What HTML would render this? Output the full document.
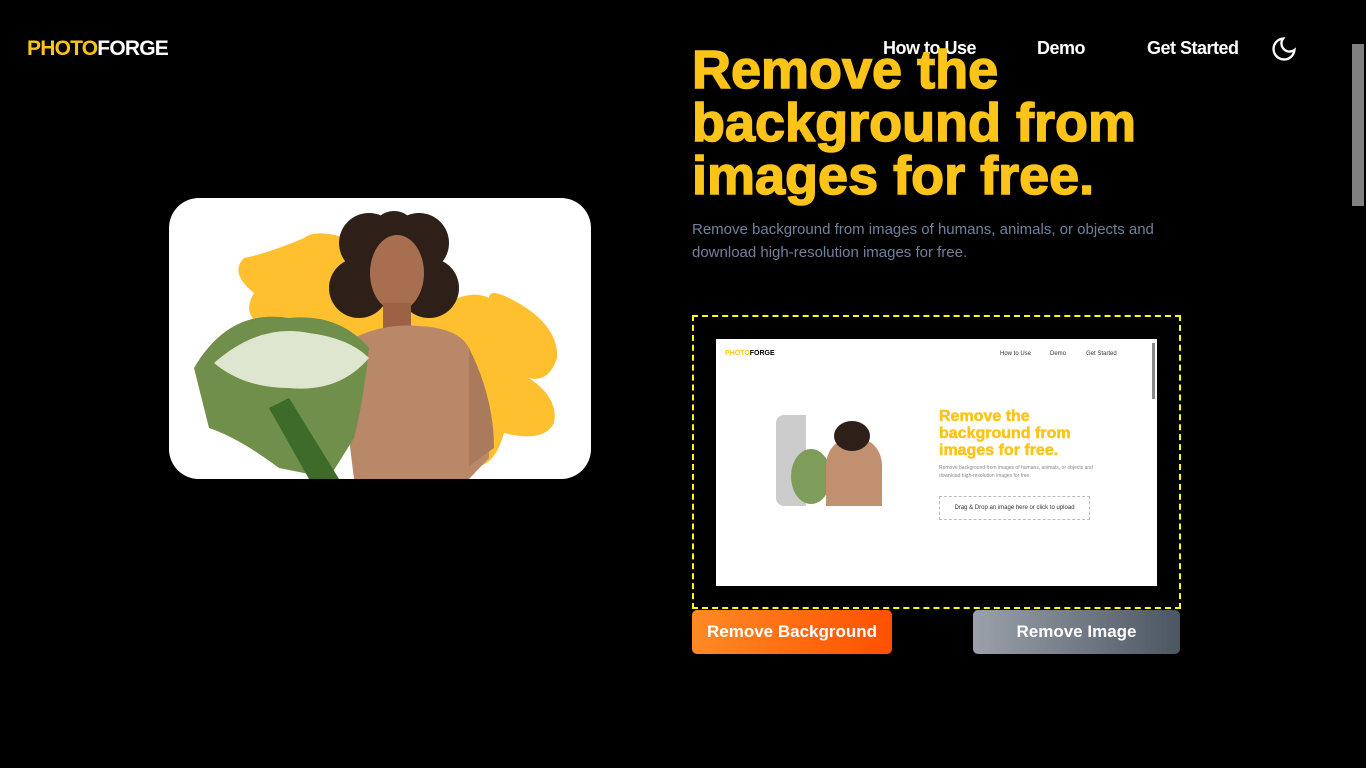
<!DOCTYPE html>
<html><head><meta charset="utf-8"><style>
*{margin:0;padding:0;box-sizing:border-box}
html,body{width:1366px;height:768px;overflow:hidden;background:#000;font-family:"Liberation Sans",sans-serif}
.logo{position:absolute;left:27px;top:37px;font-size:21px;font-weight:bold;color:#fff;letter-spacing:-0.8px}
.logo span{color:#fcc419}
.nav a{position:absolute;top:38px;color:#fff;font-size:18px;font-weight:bold;text-decoration:none;letter-spacing:-0.5px}
h1{position:absolute;left:692px;top:44px;width:540px;color:#fcc419;font-size:54px;line-height:53px;font-weight:900;letter-spacing:0px;-webkit-text-stroke:1.5px #fcc419}
.sub{position:absolute;left:692px;top:218px;width:480px;color:#71809c;font-size:15px;line-height:23px}
.card{position:absolute;left:169px;top:198px;width:422px;height:281px;background:#fff;border-radius:30px;overflow:hidden}
.drop{position:absolute;left:692px;top:315px;width:489px;height:294px;border:2px dashed #ffff00}
.shot{position:absolute;left:716px;top:339px;width:441px;height:247px;background:#fff}
.btn{position:absolute;top:610px;height:44px;border-radius:5px;color:#fff;font-size:17px;font-weight:bold;display:flex;align-items:center;justify-content:center}
.scroll{position:absolute;right:0;top:0;width:16px;height:768px;background:#000}
.thumb{position:absolute;right:2px;top:44px;width:12px;height:162px;background:#808080}
</style></head><body>
<div class="logo"><span>PHOTO</span>FORGE</div>
<div class="nav"><a style="left:883px">How to Use</a><a style="left:1037px">Demo</a><a style="left:1147px">Get Started</a></div>
<svg style="position:absolute;left:1270px;top:35px" width="28" height="28" viewBox="0 0 24 24" fill="none" stroke="#fff" stroke-width="2"><path d="M21 12.8A9 9 0 1 1 11.2 3a7 7 0 0 0 9.8 9.8z"/></svg>
<h1>Remove the background from images for free.</h1>
<div class="sub">Remove background from images of humans, animals, or objects and download high-resolution images for free.</div>
<div class="card"><svg width="422" height="281" viewBox="0 0 422 281">
<path d="M135 40 Q145 32 170 38 L200 80 L270 110 Q300 90 320 100 Q320 90 340 100 Q390 125 388 160 Q380 185 360 180 Q390 200 385 225 Q375 245 335 235 Q325 270 305 268 L200 200 L100 130 Q70 120 85 95 Q60 75 75 60 Q100 55 135 40Z" fill="#fec02f"/>
<circle cx="200" cy="45" r="30" fill="#2e1f18"/><circle cx="250" cy="45" r="30" fill="#2e1f18"/>
<circle cx="190" cy="90" r="30" fill="#2e1f18"/><circle cx="260" cy="90" r="30" fill="#2e1f18"/>
<circle cx="225" cy="35" r="22" fill="#2e1f18"/>
<ellipse cx="228" cy="75" rx="27" ry="38" fill="#a86e50"/>
<rect x="214" y="105" width="28" height="30" fill="#9c6246"/>
<path d="M185 140 Q215 125 250 128 Q290 130 300 150 Q320 200 320 260 L300 281 L185 281 L175 200 Z" fill="#b98869"/>
<path d="M300 150 Q325 200 325 250 L300 268 Z" fill="#a97a5c"/>
<path d="M25 170 Q60 110 120 120 Q170 115 200 150 Q195 200 185 240 L160 280 L110 270 Q70 240 40 230 Z" fill="#6f8f4a"/>
<path d="M45 165 Q90 125 140 135 Q180 140 200 160 Q170 195 120 190 Q75 190 45 165Z" fill="#dfe6cf"/>
<path d="M120 200 L170 281 L140 281 L100 210Z" fill="#3d6b2a"/>
</svg></div>
<div class="drop"></div>
<div class="shot">
<div style="position:absolute;left:9px;top:11px;font-size:7px;font-weight:bold"><span style="color:#fcc419">PHOTO</span>FORGE</div>
<div style="position:absolute;left:284px;top:12px;font-size:6px;color:#333">How to Use</div>
<div style="position:absolute;left:334px;top:12px;font-size:6px;color:#333">Demo</div>
<div style="position:absolute;left:370px;top:12px;font-size:6px;color:#333">Get Started</div>
<div style="position:absolute;left:60px;top:76px;width:30px;height:91px;background:#ccc;border-radius:8px 0 0 8px"></div>
<div style="position:absolute;left:75px;top:110px;width:40px;height:55px;background:#7f9d5a;border-radius:50%"></div>
<div style="position:absolute;left:110px;top:100px;width:56px;height:67px;background:#c19070;border-radius:40% 40% 0 0"></div>
<div style="position:absolute;left:118px;top:82px;width:36px;height:30px;background:#2e1f18;border-radius:50%"></div>
<div style="position:absolute;left:223px;top:69px;width:170px;color:#fcc419;font-size:16px;line-height:17px;font-weight:900;-webkit-text-stroke:0.5px #fcc419">Remove the background from images for free.</div>
<div style="position:absolute;left:223px;top:125px;width:160px;color:#888;font-size:5px;line-height:8px">Remove background from images of humans, animals, or objects and download high-resolution images for free.</div>
<div style="position:absolute;left:223px;top:157px;width:151px;height:24px;border:1px dashed #bbb;font-size:6px;color:#333;display:flex;align-items:center;justify-content:center">Drag &amp; Drop an image here or click to upload</div>
<div style="position:absolute;right:2px;top:4px;width:3px;height:56px;background:#888"></div>
</div>
<div class="btn" style="left:692px;width:200px;background:linear-gradient(90deg,#ff8a25,#ff5000)">Remove Background</div>
<div class="btn" style="left:973px;width:207px;background:linear-gradient(90deg,#9aa1ab,#4c5661)">Remove Image</div>
<div class="scroll"><div class="thumb"></div></div>
</body></html>
